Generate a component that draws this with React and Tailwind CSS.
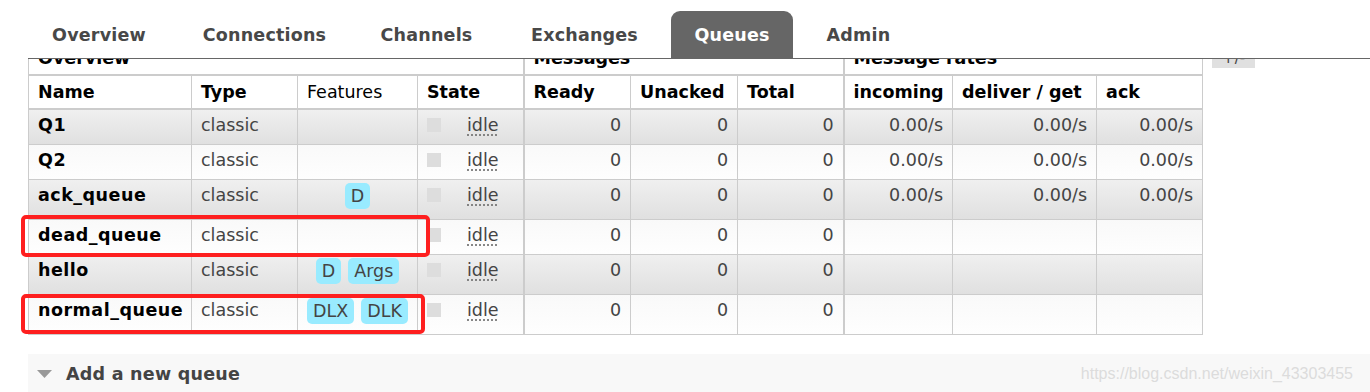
import React from 'react';

const tabs = [
  { label: 'Overview', cls: 'w-[142px]' },
  { label: 'Connections', cls: 'w-[171px] ml-[9px]' },
  { label: 'Channels', cls: 'w-[135px] ml-[9px]' },
  { label: 'Exchanges', cls: 'w-[155px] ml-[13px]' },
  { label: 'Queues', cls: 'w-[122px] ml-[9px]', active: true },
  { label: 'Admin', cls: 'w-[111px] ml-[10px]' },
];

const queues = [
  { name: 'Q1', features: [], rates: true, odd: true, h: 'h-[35px]' },
  { name: 'Q2', features: [], rates: true, h: 'h-[35px]' },
  { name: 'ack_queue', features: ['D'], rates: true, odd: true, h: 'h-[40px]' },
  { name: 'dead_queue', features: [], h: 'h-[35px]' },
  { name: 'hello', features: ['D', 'Args'], odd: true, h: 'h-[40px]' },
  { name: 'normal_queue', features: ['DLX', 'DLK'], h: 'h-[40px]' },
];

function Badge({ children }) {
  return (
    <span className="inline-block h-[26px] px-[6px] rounded-[5px] bg-[#99ebff] text-[#444] leading-[26px]">
      {children}
    </span>
  );
}

function QueueRow({ q }) {
  const bg = q.odd
    ? 'bg-linear-to-b from-[#f0f0f0] to-[#e0e0e0]'
    : 'bg-linear-to-b from-[#f9f9f9] to-[#fefefe]';
  const td = 'border border-[#ccc] px-[9px] pt-[5px] pb-[5px] align-top';
  return (
    <tr className={`${q.h} ${bg}`}>
      <td className={`${td} font-bold text-black tracking-[0.5px]`}>{q.name}</td>
      <td className={`${td} text-[#444]`}>classic</td>
      <td className="border border-[#ccc] px-[4px] py-[3px] align-top">
        {q.features.length > 0 && (
          <div className="flex justify-center gap-[7px]">
            {q.features.map(f => (
              <Badge key={f}>{f}</Badge>
            ))}
          </div>
        )}
      </td>
      <td className={td}>
        <div className="flex items-center h-[20px]">
          <span className="w-[14px] h-[14px] bg-[#ddd]" />
          <span className="ml-[26px] text-[#444] underline decoration-dotted decoration-[#777] underline-offset-[4px]">idle</span>
        </div>
      </td>
      <td className={`${td} border-l-2 text-right text-[#444]`}>0</td>
      <td className={`${td} text-right text-[#444]`}>0</td>
      <td className={`${td} text-right text-[#444]`}>0</td>
      <td className={`${td} border-l-2 text-right text-[#444]`}>{q.rates ? '0.00/s' : ''}</td>
      <td className={`${td} text-right text-[#444]`}>{q.rates ? '0.00/s' : ''}</td>
      <td className={`${td} text-right text-[#444]`}>{q.rates ? '0.00/s' : ''}</td>
    </tr>
  );
}

export default function App() {
  const th = 'border border-[#ccc] px-[9px] py-[6px] text-left align-top';
  return (
    <div className="relative w-[1370px] h-[392px] overflow-hidden bg-white font-['DejaVu_Sans',sans-serif] text-[17.5px] leading-[20px]">
      {/* top navigation */}
      <div className="relative z-10 bg-white pt-[11px]">
        <ul className="flex ml-[28px] border-b border-[#666]">
          {tabs.map(t => (
            <li
              key={t.label}
              className={`${t.cls} h-[47px] flex items-center justify-center font-bold tracking-[0.2px] ${
                t.active ? 'bg-[#666] text-white rounded-t-[9px]' : 'text-[#484848]'
              }`}
            >
              {t.label}
            </li>
          ))}
        </ul>
      </div>

      {/* queues table */}
      <div className="flex items-start ml-[28px] -mt-[18px]">
        <div className="relative">
          <table className="table-fixed border-collapse w-[1174px]">
            <colgroup>
              <col className="w-[163px]" />
              <col className="w-[106px]" />
              <col className="w-[120px]" />
              <col className="w-[106px]" />
              <col className="w-[107px]" />
              <col className="w-[107px]" />
              <col className="w-[106px]" />
              <col className="w-[109px]" />
              <col className="w-[144px]" />
              <col className="w-[106px]" />
            </colgroup>
            <thead>
              <tr className="h-[33px] bg-white">
                <th colSpan={4} className={`${th} border-b-2`}>Overview</th>
                <th colSpan={3} className={`${th} border-b-2 border-l-2`}>Messages</th>
                <th colSpan={3} className={`${th} border-b-2 border-l-2`}>Message rates</th>
              </tr>
              <tr className="h-[33px] bg-white text-black">
                <th className={`${th} border-b-2`}>Name</th>
                <th className={`${th} border-b-2`}>Type</th>
                <th className={`${th} border-b-2 font-normal`}>Features</th>
                <th className={`${th} border-b-2`}>State</th>
                <th className={`${th} border-b-2 border-l-2`}>Ready</th>
                <th className={`${th} border-b-2`}>Unacked</th>
                <th className={`${th} border-b-2`}>Total</th>
                <th className={`${th} border-b-2 border-l-2`}>incoming</th>
                <th className={`${th} border-b-2`}>deliver / get</th>
                <th className={`${th} border-b-2`}>ack</th>
              </tr>
            </thead>
            <tbody>
              {queues.map(q => (
                <QueueRow key={q.name} q={q} />
              ))}
            </tbody>
          </table>

          {/* red annotation boxes */}
          <div className="absolute left-[-7px] top-[174px] w-[409px] h-[42px] border-[4px] border-[#fe1f1f] rounded-[5px]" />
          <div className="absolute left-[-7px] top-[253px] w-[404px] h-[40px] border-[4px] border-[#fe1f1f] rounded-[5px]" />
        </div>
        <span className="ml-[9px] w-[43px] h-[27px] bg-[#e0e0e0] text-[#444] text-center leading-[34px] text-[15px]">+/-</span>
      </div>

      {/* add a new queue */}
      <div className="ml-[28px] mt-[19px] h-[40px] bg-[#f8f8f8] flex items-center">
        <svg width="15" height="8" viewBox="0 0 15 8" className="ml-[9px]">
          <polygon points="0,0 15,0 7.5,8" fill="#999" />
        </svg>
        <span className="ml-[14px] font-bold text-[17.5px] tracking-[0.25px] text-[#444]">Add a new queue</span>
      </div>

      <span className="absolute right-[17px] bottom-[8px] font-['Liberation_Sans',sans-serif] text-[16px] text-[#dcdcdc]">
        https://blog.csdn.net/weixin_43303455
      </span>
    </div>
  );
}
